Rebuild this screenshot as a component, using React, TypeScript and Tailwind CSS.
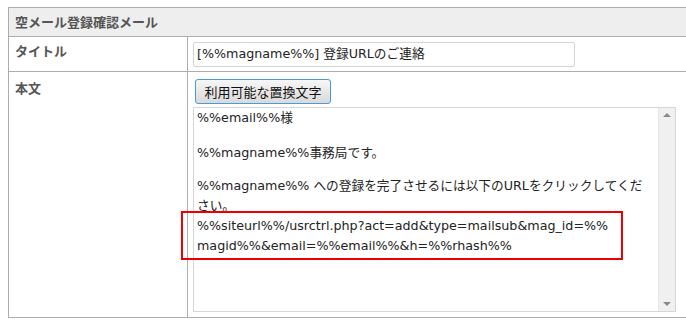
import React from "react";

const font = { fontFamily: '"DejaVu Sans", "Noto Sans CJK JP", sans-serif' };
const cjk = { fontFamily: '"Noto Sans CJK JP", sans-serif' };

export default function App() {
    return (
        <div className="relative w-[686px] h-[324px] overflow-hidden bg-white pt-[7px] pl-[8px] text-[12.7px] text-[#333]" style={font}>
            <div className="w-[690px] border-l border-t border-b border-[#adadad]">
                <div className="h-[29px] bg-[#eeeeee] border-b border-[#adadad] pl-[6px] flex items-center font-bold text-[13px] text-[#555]" style={cjk}>
                    空メール登録確認メール
                </div>
                <div className="flex h-[35px] border-b border-[#adadad]">
                    <div className="w-[179px] border-r border-[#adadad] pl-[6px] pt-[4px] font-bold text-[13px] text-[#555]" style={cjk}>タイトル</div>
                    <div className="pl-[5px] pt-[5px]">
                        <div className="w-[382px] h-[25px] border border-[#d4d4d4] rounded-[2px] pl-[3px] flex items-center leading-none text-[#222] whitespace-nowrap">
                            [%%magname%%] 登録URLのご連絡
                        </div>
                    </div>
                </div>
                <div className="flex h-[245px]">
                    <div className="w-[179px] border-r border-[#adadad] pl-[6px] pt-[6px] font-bold text-[13px] text-[#555]" style={cjk}>本文</div>
                    <div className="pl-[5px] pt-[7px] flex flex-col">
                        <div className="ml-[2px] w-[136px] h-[25px] rounded-[3px] border border-[#4a9ad6] bg-gradient-to-b from-[#f7f7f7] to-[#d9d9d9] flex items-center justify-center text-[13px] text-[#111] leading-none" style={cjk}>
                            利用可能な置換文字
                        </div>
                        <div className="mt-[3px] w-[483px] h-[205px] border border-[#d6d6d6] flex">
                            <div className="flex-1 pl-[3px] text-[#222] leading-[20px] whitespace-nowrap">
                                <div className="h-[20px]">%%email%%様</div>
                                <div className="h-[15px]" />
                                <div className="h-[20px]">%%magname%%事務局です。</div>
                                <div className="h-[13px]" />
                                <div>%%magname%% への登録を完了させるには以下のURLをクリックしてくだ</div>
                                <div>さい。</div>
                                <div>%%siteurl%%/usrctrl.php?act=add&amp;type=mailsub&amp;mag_id=%%</div>
                                <div>magid%%&amp;email=%%email%%&amp;h=%%rhash%%</div>
                            </div>
                            <div className="w-[17px] bg-[#f0f0f0] border-l border-[#e6e6e6] flex flex-col items-center justify-between py-[4px]">
                                <div className="w-0 h-0 border-x-[4px] border-x-transparent border-b-[4px] border-b-[#8a8a8a] mt-[1px]" />
                                <div className="w-0 h-0 border-x-[4px] border-x-transparent border-t-[4px] border-t-[#8a8a8a] mb-[1px]" />
                            </div>
                        </div>
                    </div>
                </div>
            </div>
            <div className="absolute left-[181px] top-[211px] w-[442px] h-[49px] border-2 border-[#ee0000]" />
        </div>
    );
}
